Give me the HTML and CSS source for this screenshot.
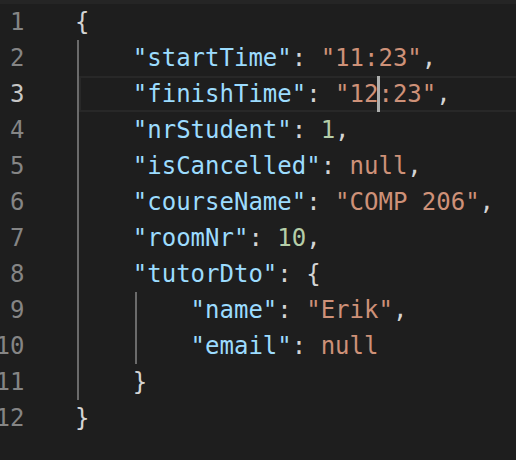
FILE: index.html
```html
<!DOCTYPE html>
<html>
<head>
<meta charset="utf-8">
<link rel="stylesheet" href="styles.css">
</head>
<body>
<div class="editor">
  <div class="topbar"></div>
  <div class="lines">
    <div class="row"><div class="gutter"><span>1</span></div><div class="code"><span class="p">{</span></div></div>
    <div class="row"><div class="gutter"><span>2</span></div><div class="code"><span class="ind g"> </span><span class="k">"startTime"</span><span class="p">: </span><span class="s">"11:23"</span><span class="p">,</span></div></div>
    <div class="row cur"><div class="gutter"><span>3</span></div><div class="code"><span class="ind g"> </span><span class="k">"finishTime"</span><span class="p">: </span><span class="s">"12<span class="caret"></span>:23"</span><span class="p">,</span></div></div>
    <div class="row"><div class="gutter"><span>4</span></div><div class="code"><span class="ind g"> </span><span class="k">"nrStudent"</span><span class="p">: </span><span class="n">1</span><span class="p">,</span></div></div>
    <div class="row"><div class="gutter"><span>5</span></div><div class="code"><span class="ind g"> </span><span class="k">"isCancelled"</span><span class="p">: </span><span class="s">null</span><span class="p">,</span></div></div>
    <div class="row"><div class="gutter"><span>6</span></div><div class="code"><span class="ind g"> </span><span class="k">"courseName"</span><span class="p">: </span><span class="s">"COMP 206"</span><span class="p">,</span></div></div>
    <div class="row"><div class="gutter"><span>7</span></div><div class="code"><span class="ind g"> </span><span class="k">"roomNr"</span><span class="p">: </span><span class="n">10</span><span class="p">,</span></div></div>
    <div class="row"><div class="gutter"><span>8</span></div><div class="code"><span class="ind g"> </span><span class="k">"tutorDto"</span><span class="p">: {</span></div></div>
    <div class="row"><div class="gutter"><span>9</span></div><div class="code"><span class="ind g"> </span><span class="ind g"> </span><span class="k">"name"</span><span class="p">: </span><span class="s">"Erik"</span><span class="p">,</span></div></div>
    <div class="row"><div class="gutter"><span>10</span></div><div class="code"><span class="ind g"> </span><span class="ind g"> </span><span class="k">"email"</span><span class="p">: </span><span class="s">null</span></div></div>
    <div class="row"><div class="gutter"><span>11</span></div><div class="code"><span class="ind g"> </span><span class="p">}</span></div></div>
    <div class="row"><div class="gutter"><span>12</span></div><div class="code"><span class="p">}</span></div></div>
  </div>
</div>
</body>
</html>
```
FILE: styles.css
```css
html, body {
  margin: 0;
  padding: 0;
  background: #1e1e1e;
  overflow: hidden;
}
.editor {
  width: 516px;
  height: 460px;
  background: #1e1e1e;
  font-family: "DejaVu Sans Mono", monospace;
  font-size: 24px;
  overflow: hidden;
}
.topbar {
  height: 4px;
  background: #252525;
}
.row {
  display: flex;
  height: 36px;
  line-height: 36px;
  white-space: pre;
}
.gutter {
  flex: 0 0 24.5px;
  width: 24.5px;
  min-width: 0;
  display: flex;
  justify-content: flex-end;
  margin-right: 50.5px;
  color: #858585;
}
.gutter span {
  flex-shrink: 0;
}
.cur .gutter {
  color: #c6c6c6;
}
.code {
  flex: 1;
  min-width: 0;
  position: relative;
  color: #d4d4d4;
}
.cur .code::after {
  content: "";
  position: absolute;
  left: 4px;
  top: 0;
  right: -4px;
  bottom: 0;
  border: 2px solid #282828;
}
.ind {
  display: inline-block;
  width: 4ch;
  height: 36px;
  vertical-align: top;
}
.g {
  background: linear-gradient(#6b6b6b, #6b6b6b) 2px 0 / 2px 100% no-repeat;
}
.k { color: #9cdcfe; }
.s { color: #ce9178; }
.n { color: #b5cea8; }
.p { color: #d4d4d4; }
.caret {
  display: inline-block;
  position: relative;
  z-index: 1;
  width: 3px;
  height: 36px;
  margin-left: -1px;
  margin-right: -2px;
  vertical-align: top;
  background: #aeafad;
}
```
